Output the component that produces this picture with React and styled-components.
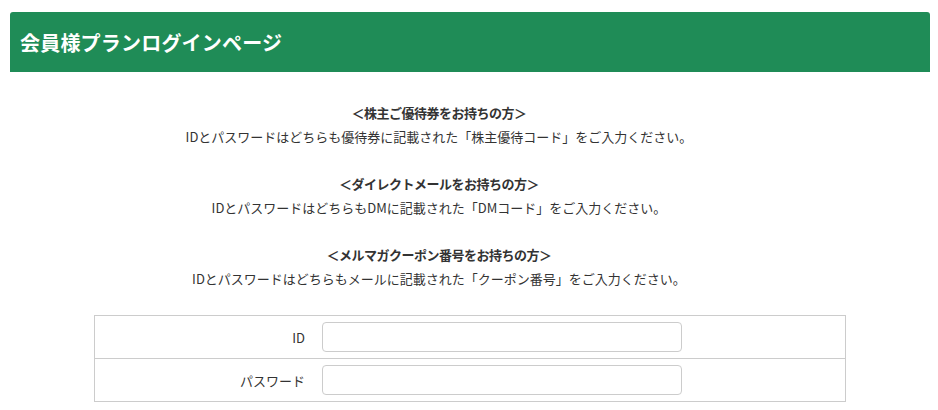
import React from "react";
import styled, { createGlobalStyle } from "styled-components";

const Global = createGlobalStyle`
  html, body { margin: 0; padding: 0; background: #fff; }
  body {
    font-family: "Noto Sans CJK JP", "Noto Sans", sans-serif;
    color: #333;
  }
`;

const Page = styled.div`
  padding: 12px 8px 0 10px;
`;

const Header = styled.div`
  height: 60px;
  background: #1f8c57;
  border-radius: 3px 3px 0 0;
  display: flex;
  align-items: center;
  padding: 0 10px;
`;

const Title = styled.h1`
  margin: 0;
  color: #fff;
  font-size: 20px;
  font-weight: 700;
  letter-spacing: 0.2px;
`;

const Content = styled.div`
  padding-top: 29px;
  display: flex;
  flex-direction: column;
  align-items: center;
`;

const Notes = styled.div`
  align-self: stretch;
  padding-right: 62px;
  display: flex;
  flex-direction: column;
  gap: 23px;
  margin-bottom: 24px;
`;

const Section = styled.div`
  text-align: center;
`;

const Heading = styled.p`
  margin: 0;
  font-size: 13px;
  line-height: 24px;
  font-weight: 700;
  letter-spacing: -0.5px;
`;

const Body = styled.p`
  margin: 0;
  font-size: 13px;
  line-height: 24px;
  font-weight: 400;
`;

const Form = styled.div`
  width: 752px;
  border: 1px solid #ccc;
  box-sizing: border-box;
`;

const Row = styled.div`
  display: grid;
  grid-template-columns: 219px 1fr;
  align-items: center;
  border-top: ${(p) => (p.$first ? "none" : "1px solid #ccc")};
`;

const Label = styled.div`
  text-align: right;
  font-size: 13px;
  padding-right: 9px;
`;

const Cell = styled.div`
  padding: 6px 8px;
`;

const Input = styled.input`
  display: block;
  width: 360px;
  height: 30px;
  box-sizing: border-box;
  border: 1px solid #ccc;
  border-radius: 4px;
  font-size: 13px;
  padding: 0 8px;
  outline: none;
`;

const sections = [
  {
    h: "＜株主ご優待券をお持ちの方＞",
    b: "IDとパスワードはどちらも優待券に記載された「株主優待コード」をご入力ください。",
  },
  {
    h: "＜ダイレクトメールをお持ちの方＞",
    b: "IDとパスワードはどちらもDMに記載された「DMコード」をご入力ください。",
  },
  {
    h: "＜メルマガクーポン番号をお持ちの方＞",
    b: "IDとパスワードはどちらもメールに記載された「クーポン番号」をご入力ください。",
  },
];

export default function App() {
  return (
    <Page>
      <Global />
      <Header>
        <Title>会員様プランログインページ</Title>
      </Header>
      <Content>
        <Notes>
          {sections.map((s) => (
            <Section key={s.h}>
              <Heading>{s.h}</Heading>
              <Body>{s.b}</Body>
            </Section>
          ))}
        </Notes>
        <Form>
          <Row $first>
            <Label>ID</Label>
            <Cell>
              <Input type="text" />
            </Cell>
          </Row>
          <Row>
            <Label>パスワード</Label>
            <Cell>
              <Input type="password" />
            </Cell>
          </Row>
        </Form>
      </Content>
    </Page>
  );
}
